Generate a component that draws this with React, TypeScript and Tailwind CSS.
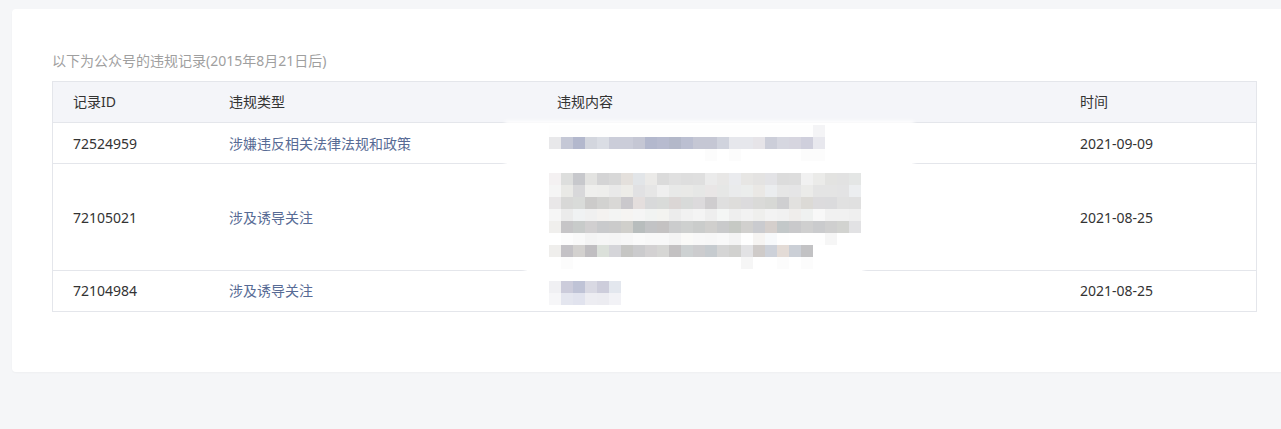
import React from 'react';

const FONT = '"Noto Sans", "Noto Sans CJK SC", sans-serif';

// pixelated preview of the violation content (hidden text)
const mosaicA: string[][] = [
  ['#fefefe', '#fefefe', '#fefefe', '#fefefe', '#fefefe', '#fefefe', '#fefefe', '#fefefe', '#fefefe', '#fefefe', '#fefefe', '#fefefe', '#fefefe', '#fefefe', '#fefefe', '#fefefe', '#fefefe', '#fefefe', '#fefefe', '#fefefe', '#fefefe', '#fefefe', '#f4f4f6'],
  ['#e8e8ea', '#c5c8d6', '#b3b8cd', '#d3d6de', '#dadde4', '#cbcdd9', '#cbcdd9', '#c5c7d4', '#b3b8cd', '#b7bbcf', '#b3b8c9', '#bbbfd1', '#c5c7d4', '#c5c7d4', '#d0d3dd', '#e6e7ec', '#e6e7ec', '#e6e4e8', '#ccced9', '#d6d7e0', '#d6d5df', '#cfcfdc', '#e8e8ee'],
  ['#ffffff', '#ffffff', '#ffffff', '#ffffff', '#ffffff', '#ffffff', '#ffffff', '#ffffff', '#ffffff', '#ffffff', '#ffffff', '#ffffff', '#ffffff', '#fcfcfc', '#ffffff', '#fcfcfc', '#ffffff', '#ffffff', '#ffffff', '#ffffff', '#ffffff', '#fcfcfc', '#fcfcfc'],
];

const mosaicB: string[][] = [
  ['#f4f1f2', '#dddedd', '#c7c8cc', '#e3e3e1', '#d4d4d5', '#d8d8d8', '#e4e0dc', '#e2e5e8', '#ebeae8', '#dbdbdb', '#e0e0e0', '#dedede', '#dfdfdf', '#ebebeb', '#e8e7e6', '#eaebee', '#e7e6e4', '#e4e3e2', '#e3e3e6', '#dcdcdc', '#dddddd', '#f1f1f1', '#ebebe9', '#e3e3e1', '#e2e2e2', '#e4e6e5'],
  ['#f5f5f5', '#e9e9e6', '#d8d8da', '#efefed', '#eeeeec', '#e9e9e9', '#edece8', '#e1e1e3', '#e6e6e6', '#efefef', '#e8e9e8', '#e9e9e7', '#e6e7e6', '#e9e6e6', '#e6e7e6', '#eaebec', '#ebedec', '#eae8e5', '#ebedef', '#e6e6e6', '#e5e5e6', '#ebebe9', '#e4e4e4', '#e4e4e4', '#e3e3e4', '#eceef0'],
  ['#e9e7e8', '#d8d8d7', '#d9dbd9', '#cccbca', '#d2d2d0', '#d9d8d6', '#cac8cc', '#e4dedd', '#d8d9da', '#d9dbd9', '#dbd6d5', '#d8dad9', '#dcdadc', '#cfcdcf', '#dfdfdf', '#dedddb', '#dcdbdd', '#dadad8', '#d7d8d5', '#cfcfd1', '#e2e1df', '#dcdad6', '#dcdbdd', '#dbdbdd', '#e1e1e1', '#e0e0e0'],
  ['#f6f6f6', '#ebebeb', '#f0f2f3', '#f0f0f0', '#f4f2f0', '#f3f4f3', '#f6f4f2', '#f5f5f5', '#f1f3f2', '#f3f3f0', '#ececec', '#f1f1f1', '#f4f4f4', '#eeeeee', '#f4f6f5', '#eeeeee', '#f2f2f2', '#efefed', '#f3f3f3', '#f1f1f1', '#efedeb', '#eff1f0', '#f8f8f8', '#f1f1f1', '#f1f1f1', '#efefef'],
  ['#f0efed', '#c6c5c7', '#c8cbca', '#d1cfd0', '#c9cacc', '#cbcbcb', '#d0cfcb', '#b8bdbd', '#c2c3c5', '#c4c2c2', '#cbcccd', '#ced0cf', '#cacccb', '#d0cfcd', '#c9cacb', '#c6c9c4', '#d1d0ce', '#cacbcf', '#d5cfcc', '#c3c8c9', '#c9c9cb', '#cfcfcf', '#cacbcd', '#cfcfcf', '#d2d3d0', '#e2e2e4'],
  ['#ffffff', '#fcfcfc', '#f9f9f9', '#f4f4f4', '#f6f6f6', '#f5f5f5', '#f7f7f7', '#fafafa', '#f8f8f8', '#f8f8f8', '#f4f4f4', '#fafaf8', '#f8f8f8', '#f7f7f7', '#f9f9f9', '#f4f4f4', '#fefefe', '#f6f4f2', '#f7f9fb', '#fefefe', '#ffffff', '#fefefe', '#fefefe', '#f6f6f6', '#ffffff', '#ffffff'],
  ['#efeeec', '#c4c2c6', '#d3d1cf', '#c0bec1', '#dbe0da', '#d5d5d9', '#c6c6c4', '#cbcbcd', '#d3d1d2', '#d6d6d4', '#c3c1c2', '#cdd1d2', '#ccccce', '#c6cbcf', '#d5d5d5', '#d1d1cf', '#e2e2e4', '#cfcbc9', '#cdd1d9', '#e3dbd6', '#cbcfd6', '#c2c2c4'],
  ['#ffffff', '#fcfcfc', '#ffffff', '#ffffff', '#ffffff', '#ffffff', '#ffffff', '#ffffff', '#ffffff', '#ffffff', '#ffffff', '#ffffff', '#ffffff', '#ffffff', '#ffffff', '#ffffff', '#f6f6f6', '#ffffff', '#ffffff', '#fcfcfc', '#ffffff', '#fcfcfc'],
];

const mosaicC: string[][] = [
  ['#f0f0f3', '#ccccdb', '#bfc3d6', '#d9d9e3', '#cdcddb', '#e3e7ee'],
  ['#f6f6f8', '#e4e6ef', '#e1e3ee', '#ededf2', '#ececf1', '#f2f2f6'],
];

const Mosaic: React.FC<{ rows: string[][] }> = ({ rows }) => (
  <div className="flex flex-col">
    {rows.map((row, i) => (
      <div key={i} className="flex">
        {row.map((c, j) => (
          <div key={j} className="w-[12px] h-[12px]" style={{ backgroundColor: c }} />
        ))}
      </div>
    ))}
  </div>
);

const records = [
  { id: '72524959', type: '涉嫌违反相关法律法规和政策', date: '2021-09-09', rowClass: 'h-[41px] border-b border-[#e4e6eb]' },
  { id: '72105021', type: '涉及诱导关注', date: '2021-08-25', rowClass: 'h-[107px] border-b border-[#e4e6eb]' },
  { id: '72104984', type: '涉及诱导关注', date: '2021-08-25', rowClass: 'h-[40px]' },
];

const cols = 'grid grid-cols-[156px_328px_523px_1fr]';

export default function App() {
  return (
    <div
      className="min-h-screen w-full overflow-hidden bg-[#f5f6f8] pt-[9px] pl-[12px]"
      style={{ fontFamily: FONT }}
    >
      <div className="w-[1290px] bg-white rounded-[4px] shadow-[0_1px_2px_rgba(0,0,0,0.03)] pl-[40px] pt-[42px] pb-[60px]">
        <p className="text-[14px] leading-[20px] text-[#9f9f9f] mb-[10px]">
          以下为公众号的违规记录(2015年8月21日后)
        </p>

        <div className="w-[1205px] border border-[#e4e6eb] text-[14px] leading-[20px] text-[#333333]">
          {/* header */}
          <div className={`${cols} h-[41px] bg-[#f4f5f9] border-b border-[#e4e6eb]`}>
            <div className="flex items-center pl-[20px]">记录ID</div>
            <div className="flex items-center pl-[20px]">违规类型</div>
            <div className="flex items-center pl-[20px]">违规内容</div>
            <div className="flex items-center pl-[20px]">时间</div>
          </div>

          {records.map((r, i) => (
            <div key={r.id} className={`${cols} ${r.rowClass}`}>
              <div className="flex items-center pl-[20px] pb-[1px]">{r.id}</div>
              <div className="flex items-center pl-[20px] pb-[1px] text-[#576b95]">{r.type}</div>
              <div className="flex">
                {i === 0 && (
                  <div className="relative -ml-[30px] w-[405px] h-[43px] bg-white pl-[42px] pt-[2px] shadow-[0_0_4px_2px_#fff]">
                    <Mosaic rows={mosaicA} />
                  </div>
                )}
                {i === 1 && (
                  <div className="relative -ml-[10px] w-[335px] h-[108px] bg-white pl-[22px] pt-[9px] shadow-[0_0_4px_2px_#fff]">
                    <Mosaic rows={mosaicB} />
                  </div>
                )}
                {i === 2 && (
                  <div className="ml-[12px] pt-[10px]">
                    <Mosaic rows={mosaicC} />
                  </div>
                )}
              </div>
              <div className="flex items-center pl-[20px] pb-[1px]">{r.date}</div>
            </div>
          ))}
        </div>
      </div>
    </div>
  );
}
